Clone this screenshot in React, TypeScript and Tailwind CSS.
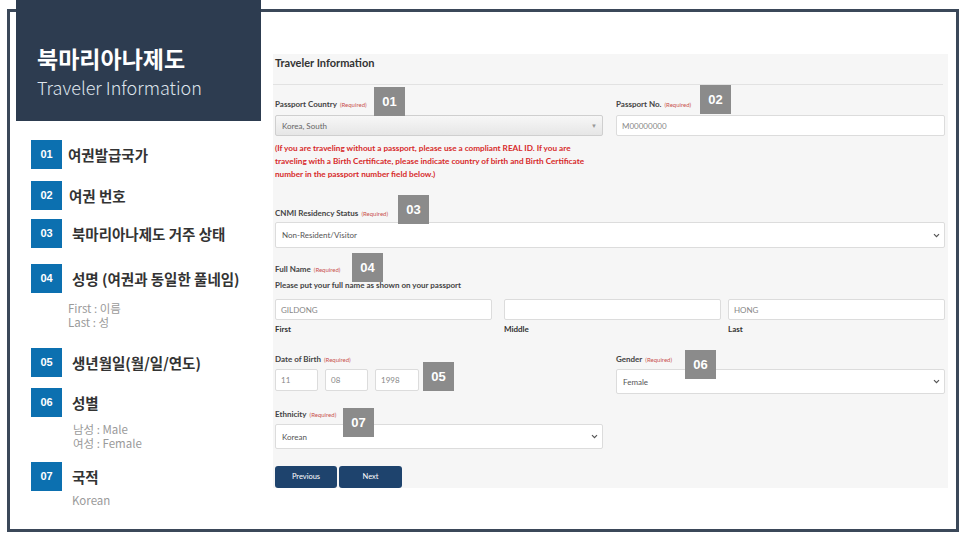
import React from "react";

const kr = { fontFamily: '"Noto Sans CJK KR", "Noto Sans", sans-serif' };
const lato = { fontFamily: 'Lato, "Liberation Sans", sans-serif' };

function BlueBadge({ n }: { n: string }) {
  return (
    <div
      className="w-[31px] h-[29px] bg-[#0c70b0] text-white flex items-center justify-center text-[11px] font-bold shrink-0"
      style={{ fontFamily: '"Liberation Sans", Arial, sans-serif' }}
    >
      {n}
    </div>
  );
}

function GrayBadge({ n, cls }: { n: string; cls: string }) {
  return (
    <div
      className={`absolute w-[31px] h-[29px] bg-[#8b8b8b] text-white flex items-center justify-center text-[13px] font-bold ${cls}`}
      style={{ fontFamily: '"Liberation Sans", Arial, sans-serif' }}
    >
      {n}
    </div>
  );
}

function Label({ text, req = true }: { text: string; req?: boolean }) {
  return (
    <div className="h-[12px] leading-[12px] text-[8px] font-bold text-[#444] whitespace-nowrap">
      {text}
      {req && <span className="ml-[3px] text-[6px] font-normal text-[#c9504c]">(Required)</span>}
    </div>
  );
}

function Chevron() {
  return (
    <svg width="7" height="5" viewBox="0 0 7 5" className="shrink-0">
      <path d="M1 1.2 L3.5 3.7 L6 1.2" fill="none" stroke="#555" strokeWidth="1.2" />
    </svg>
  );
}

function SelectBox({ value, h, cls = "" }: { value: string; h: string; cls?: string }) {
  return (
    <div
      className={`${h} ${cls} bg-white border border-[#dcdcdc] rounded-[2px] flex items-center justify-between pl-[6px] pr-[4px] text-[8px] text-[#555]`}
    >
      <span>{value}</span>
      <Chevron />
    </div>
  );
}

function InputBox({ value, cls }: { value: string; cls: string }) {
  return (
    <div
      className={`${cls} bg-white border border-[#dcdcdc] rounded-[2px] flex items-center pl-[5px] text-[8px] text-[#888]`}
    >
      {value}
    </div>
  );
}

function Item({
  n,
  label,
  mt,
  lpl,
  sub,
  subMt,
  subPl,
}: {
  n: string;
  label: string;
  mt: string;
  lpl: string;
  sub?: string[];
  subMt?: string;
  subPl?: string;
}) {
  return (
    <div className={mt}>
      <div className="flex items-center">
        <BlueBadge n={n} />
        <div className={`${lpl} text-[14.5px] font-bold text-[#333] leading-[18px] whitespace-nowrap`}>{label}</div>
      </div>
      {sub && (
        <div className={`${subMt} ${subPl} text-[11.5px] leading-[14px] text-[#9a9a9a]`}>
          {sub.map((s) => (
            <div key={s}>{s}</div>
          ))}
        </div>
      )}
    </div>
  );
}

export default function App() {
  return (
    <div className="w-[966px] h-[540px] bg-white pt-[9px] pl-[7px] overflow-hidden">
      <div className="w-[952px] h-[523px] border-[3px] border-[#3b4859] flex">
        {/* Left column */}
        <div className="w-[263px] shrink-0" style={kr}>
          <div className="-mt-[12px] ml-[6px] w-[245px] h-[121px] bg-[#2d3c50] pl-[21px] pt-[43px]">
            <div className="text-[23px] leading-[30px] font-bold text-white">북마리아나제도</div>
            <div className="mt-[3px] text-[18px] leading-[22px] font-light text-[#dfe5ec]">Traveler Information</div>
          </div>
          <div className="pl-[21px]">
            <Item n="01" label="여권발급국가" mt="mt-[19px]" lpl="pl-[6px]" />
            <Item n="02" label="여권 번호" mt="mt-[12px]" lpl="pl-[7px]" />
            <Item n="03" label="북마리아나제도 거주 상태" mt="mt-[9px]" lpl="pl-[10px]" />
            <Item
              n="04"
              label="성명 (여권과 동일한 풀네임)"
              mt="mt-[16px]"
              lpl="pl-[10px]"
              sub={["First : 이름", "Last : 성"]}
              subMt="mt-[8px]"
              subPl="pl-[37px]"
            />
            <Item n="05" label="생년월일(월/일/연도)" mt="mt-[19px]" lpl="pl-[10px]" />
            <Item
              n="06"
              label="성별"
              mt="mt-[11px]"
              lpl="pl-[10px]"
              sub={["남성 : Male", "여성 : Female"]}
              subMt="mt-[5px]"
              subPl="pl-[42px]"
            />
            <Item
              n="07"
              label="국적"
              mt="mt-[12px]"
              lpl="pl-[10px]"
              sub={["Korean"]}
              subMt="mt-[2px]"
              subPl="pl-[41px]"
            />
          </div>
        </div>

        {/* Form panel */}
        <div className="relative mt-[42px] w-[675px] h-[434px] bg-[#f6f6f6]" style={lato}>
          <div className="w-[670px] h-[31px] border-b border-[#e2e2e2] pl-[2px] pt-[2px]">
            <div className="text-[11px] leading-[14px] font-bold text-[#333]">Traveler Information</div>
          </div>
          <div className="pl-[2px] pr-[3px]">
            <div className="flex gap-[13px] mt-[13px]">
              <div className="w-[328px]">
                <Label text="Passport Country" />
                <div className="mt-[5px] h-[21px] border border-[#cfcfcf] rounded-[2px] bg-gradient-to-b from-[#f7f7f7] to-[#e6e6e6] flex items-center justify-between pl-[6px] pr-[5px] text-[8px] text-[#666]">
                  <span>Korea, South</span>
                  <span className="text-[6px] text-[#999]">▼</span>
                </div>
                <div className="mt-[5.5px] text-[8.2px] leading-[13px] font-bold text-[#d62a2a] whitespace-nowrap">
                  (If you are traveling without a passport, please use a compliant REAL ID. If you are
                  <br />
                  traveling with a Birth Certificate, please indicate country of birth and Birth Certificate
                  <br />
                  number in the passport number field below.)
                </div>
              </div>
              <div className="w-[329px]">
                <Label text="Passport No." />
                <InputBox value="M00000000" cls="mt-[5px] h-[21px]" />
              </div>
            </div>

            <div className="mt-[26.5px]">
              <Label text="CNMI Residency Status" />
              <SelectBox value="Non-Resident/Visitor" h="h-[26px]" cls="mt-[3px]" />
            </div>

            <div className="mt-[15px]">
              <Label text="Full Name" />
              <div className="mt-[4px] h-[12px] leading-[12px] text-[8px] font-bold text-[#444]">
                Please put your full name as shown on your passport
              </div>
              <div className="mt-[8px] flex">
                <div className="w-[217px]">
                  <InputBox value="GILDONG" cls="h-[21px]" />
                  <div className="mt-[3px] text-[8px] leading-[12px] font-bold text-[#333]">First</div>
                </div>
                <div className="w-[217px] ml-[12px]">
                  <InputBox value="" cls="h-[21px]" />
                  <div className="mt-[3px] text-[8px] leading-[12px] font-bold text-[#333]">Middle</div>
                </div>
                <div className="w-[217px] ml-[7px]">
                  <InputBox value="HONG" cls="h-[21px]" />
                  <div className="mt-[3px] text-[8px] leading-[12px] font-bold text-[#333]">Last</div>
                </div>
              </div>
            </div>

            <div className="mt-[18px] flex gap-[13px]">
              <div className="w-[328px]">
                <Label text="Date of Birth" />
                <div className="mt-[4px] flex gap-[7px]">
                  <InputBox value="11" cls="w-[43px] h-[22px]" />
                  <InputBox value="08" cls="w-[43px] h-[22px]" />
                  <InputBox value="1998" cls="w-[44px] h-[22px]" />
                </div>
              </div>
              <div className="w-[329px]">
                <Label text="Gender" />
                <SelectBox value="Female" h="h-[25px]" cls="mt-[4px]" />
              </div>
            </div>

            <div className="mt-[14px] w-[328px]">
              <Label text="Ethnicity" />
              <SelectBox value="Korean" h="h-[25px]" cls="mt-[4px]" />
            </div>

            <div className="mt-[17px] flex gap-[2px]">
              <div className="w-[62px] h-[22px] bg-[#1e436d] rounded-[3px] text-white text-[7.5px] flex items-center justify-center">
                Previous
              </div>
              <div className="w-[63px] h-[22px] bg-[#1e436d] rounded-[3px] text-white text-[7.5px] flex items-center justify-center">
                Next
              </div>
            </div>
          </div>

          <GrayBadge n="01" cls="left-[101px] top-[33px]" />
          <GrayBadge n="02" cls="left-[427px] top-[31px]" />
          <GrayBadge n="03" cls="left-[125px] top-[141px]" />
          <GrayBadge n="04" cls="left-[79px] top-[199px]" />
          <GrayBadge n="05" cls="left-[150px] top-[308px]" />
          <GrayBadge n="06" cls="left-[412px] top-[296px]" />
          <GrayBadge n="07" cls="left-[70px] top-[354px]" />
        </div>
      </div>
    </div>
  );
}
